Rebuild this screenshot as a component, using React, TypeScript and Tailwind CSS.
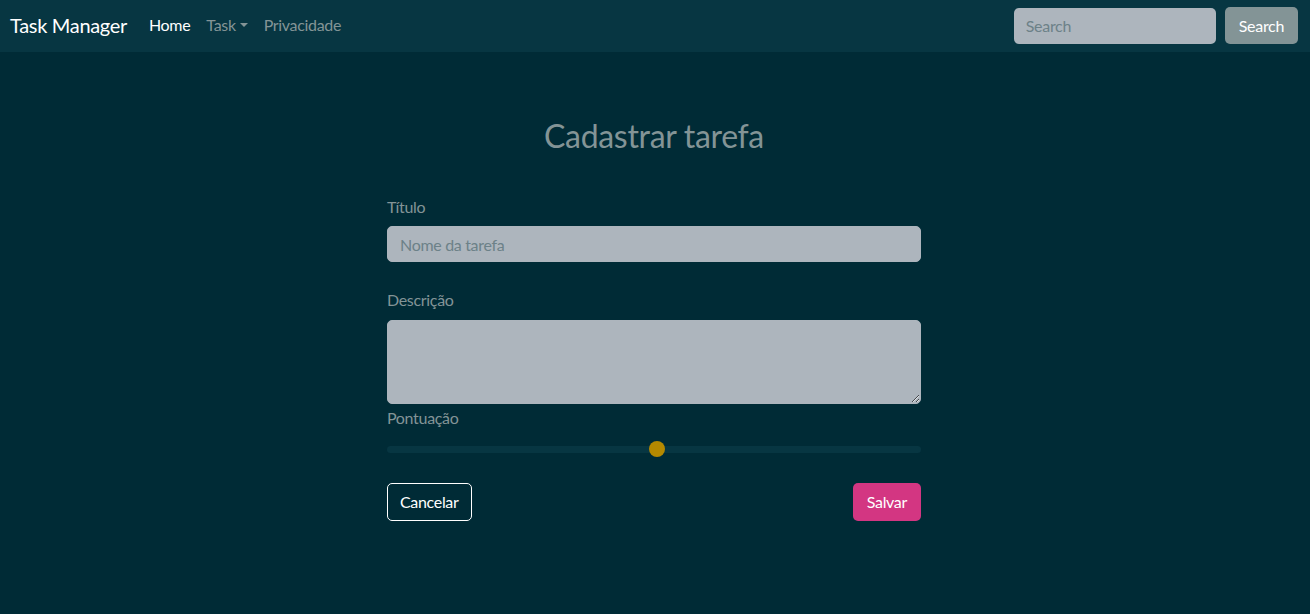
import React, { useState } from 'react';

export default function App() {
    const [score, setScore] = useState(50)

    return (
        <div className="min-h-screen bg-[#002b36] text-[#839496] tracking-[-0.02em]" style={{ fontFamily: '"Source Sans Pro", Lato, "Noto Sans", sans-serif' }}>
            <nav className="h-[52px] bg-[#073642] flex items-center px-[10px]">
                <a className="text-[20px] text-white mr-[22px] -mt-[2px]">Task Manager</a>
                <div className="flex items-center gap-[16px] text-[16px] -mt-[2px]">
                    <a className="text-white">Home</a>
                    <a className="text-[#839496] flex items-center gap-1">
                        Task
                        <span className="w-0 h-0 border-x-[4px] border-x-transparent border-t-[4px] border-t-[#839496]"></span>
                    </a>
                    <a className="text-[#839496]">Privacidade</a>
                </div>
                <div className="ml-auto flex items-center gap-[9px] pr-[2px] -mt-[1px]">
                    <input
                        placeholder="Search"
                        className="w-[202px] h-[36px] rounded-[5px] bg-[#adb5bd] px-3 text-[16px] placeholder:text-[#6c8188] outline-none"
                    />
                    <button className="h-[37px] px-[14px] rounded-[5px] bg-[#839496] text-white text-[16px]">Search</button>
                </div>
            </nav>

            <main className="w-[534px] mx-auto pt-[66px] -translate-x-[1px]">
                <h2 className="text-[32px] text-center text-[#839496] leading-[36px] mb-[41px]">Cadastrar tarefa</h2>

                <label className="block text-[16px] mb-[7px]">Título</label>
                <input
                    placeholder="Nome da tarefa"
                    className="w-full h-[36px] rounded-[5px] bg-[#adb5bd] px-3 text-[16px] placeholder:text-[#6c8188] outline-none border border-[#adb5bd]"
                />

                <label className="block text-[16px] mt-[26px] mb-[8px]">Descrição</label>
                <textarea className="w-full h-[84px] rounded-[5px] bg-[#adb5bd] px-3 py-2 text-[16px] outline-none block border border-[#adb5bd]"></textarea>

                <label className="block text-[16px] mt-[2px]">Pontuação</label>
                <div className="relative h-[16px] mt-[11px] mb-[26px] flex items-center">
                    <div className="w-full h-[7px] rounded-full bg-[#073642]"></div>
                    <div
                        className="absolute w-[16px] h-[16px] rounded-full bg-[#b58900]"
                        style={{ left: `calc(${score}% - 8px + 3px)` }}
                    ></div>
                    <input
                        type="range"
                        min={0}
                        max={100}
                        value={score}
                        onChange={(e) => setScore(Number(e.target.value))}
                        className="absolute inset-0 w-full opacity-0"
                    />
                </div>

                <div className="flex justify-between">
                    <button className="h-[38px] px-3 rounded-[5px] border border-white text-white text-[16px]">Cancelar</button>
                    <button className="h-[38px] px-[14px] rounded-[5px] bg-[#d33682] text-white text-[16px]">Salvar</button>
                </div>
            </main>
        </div>
    );
}
